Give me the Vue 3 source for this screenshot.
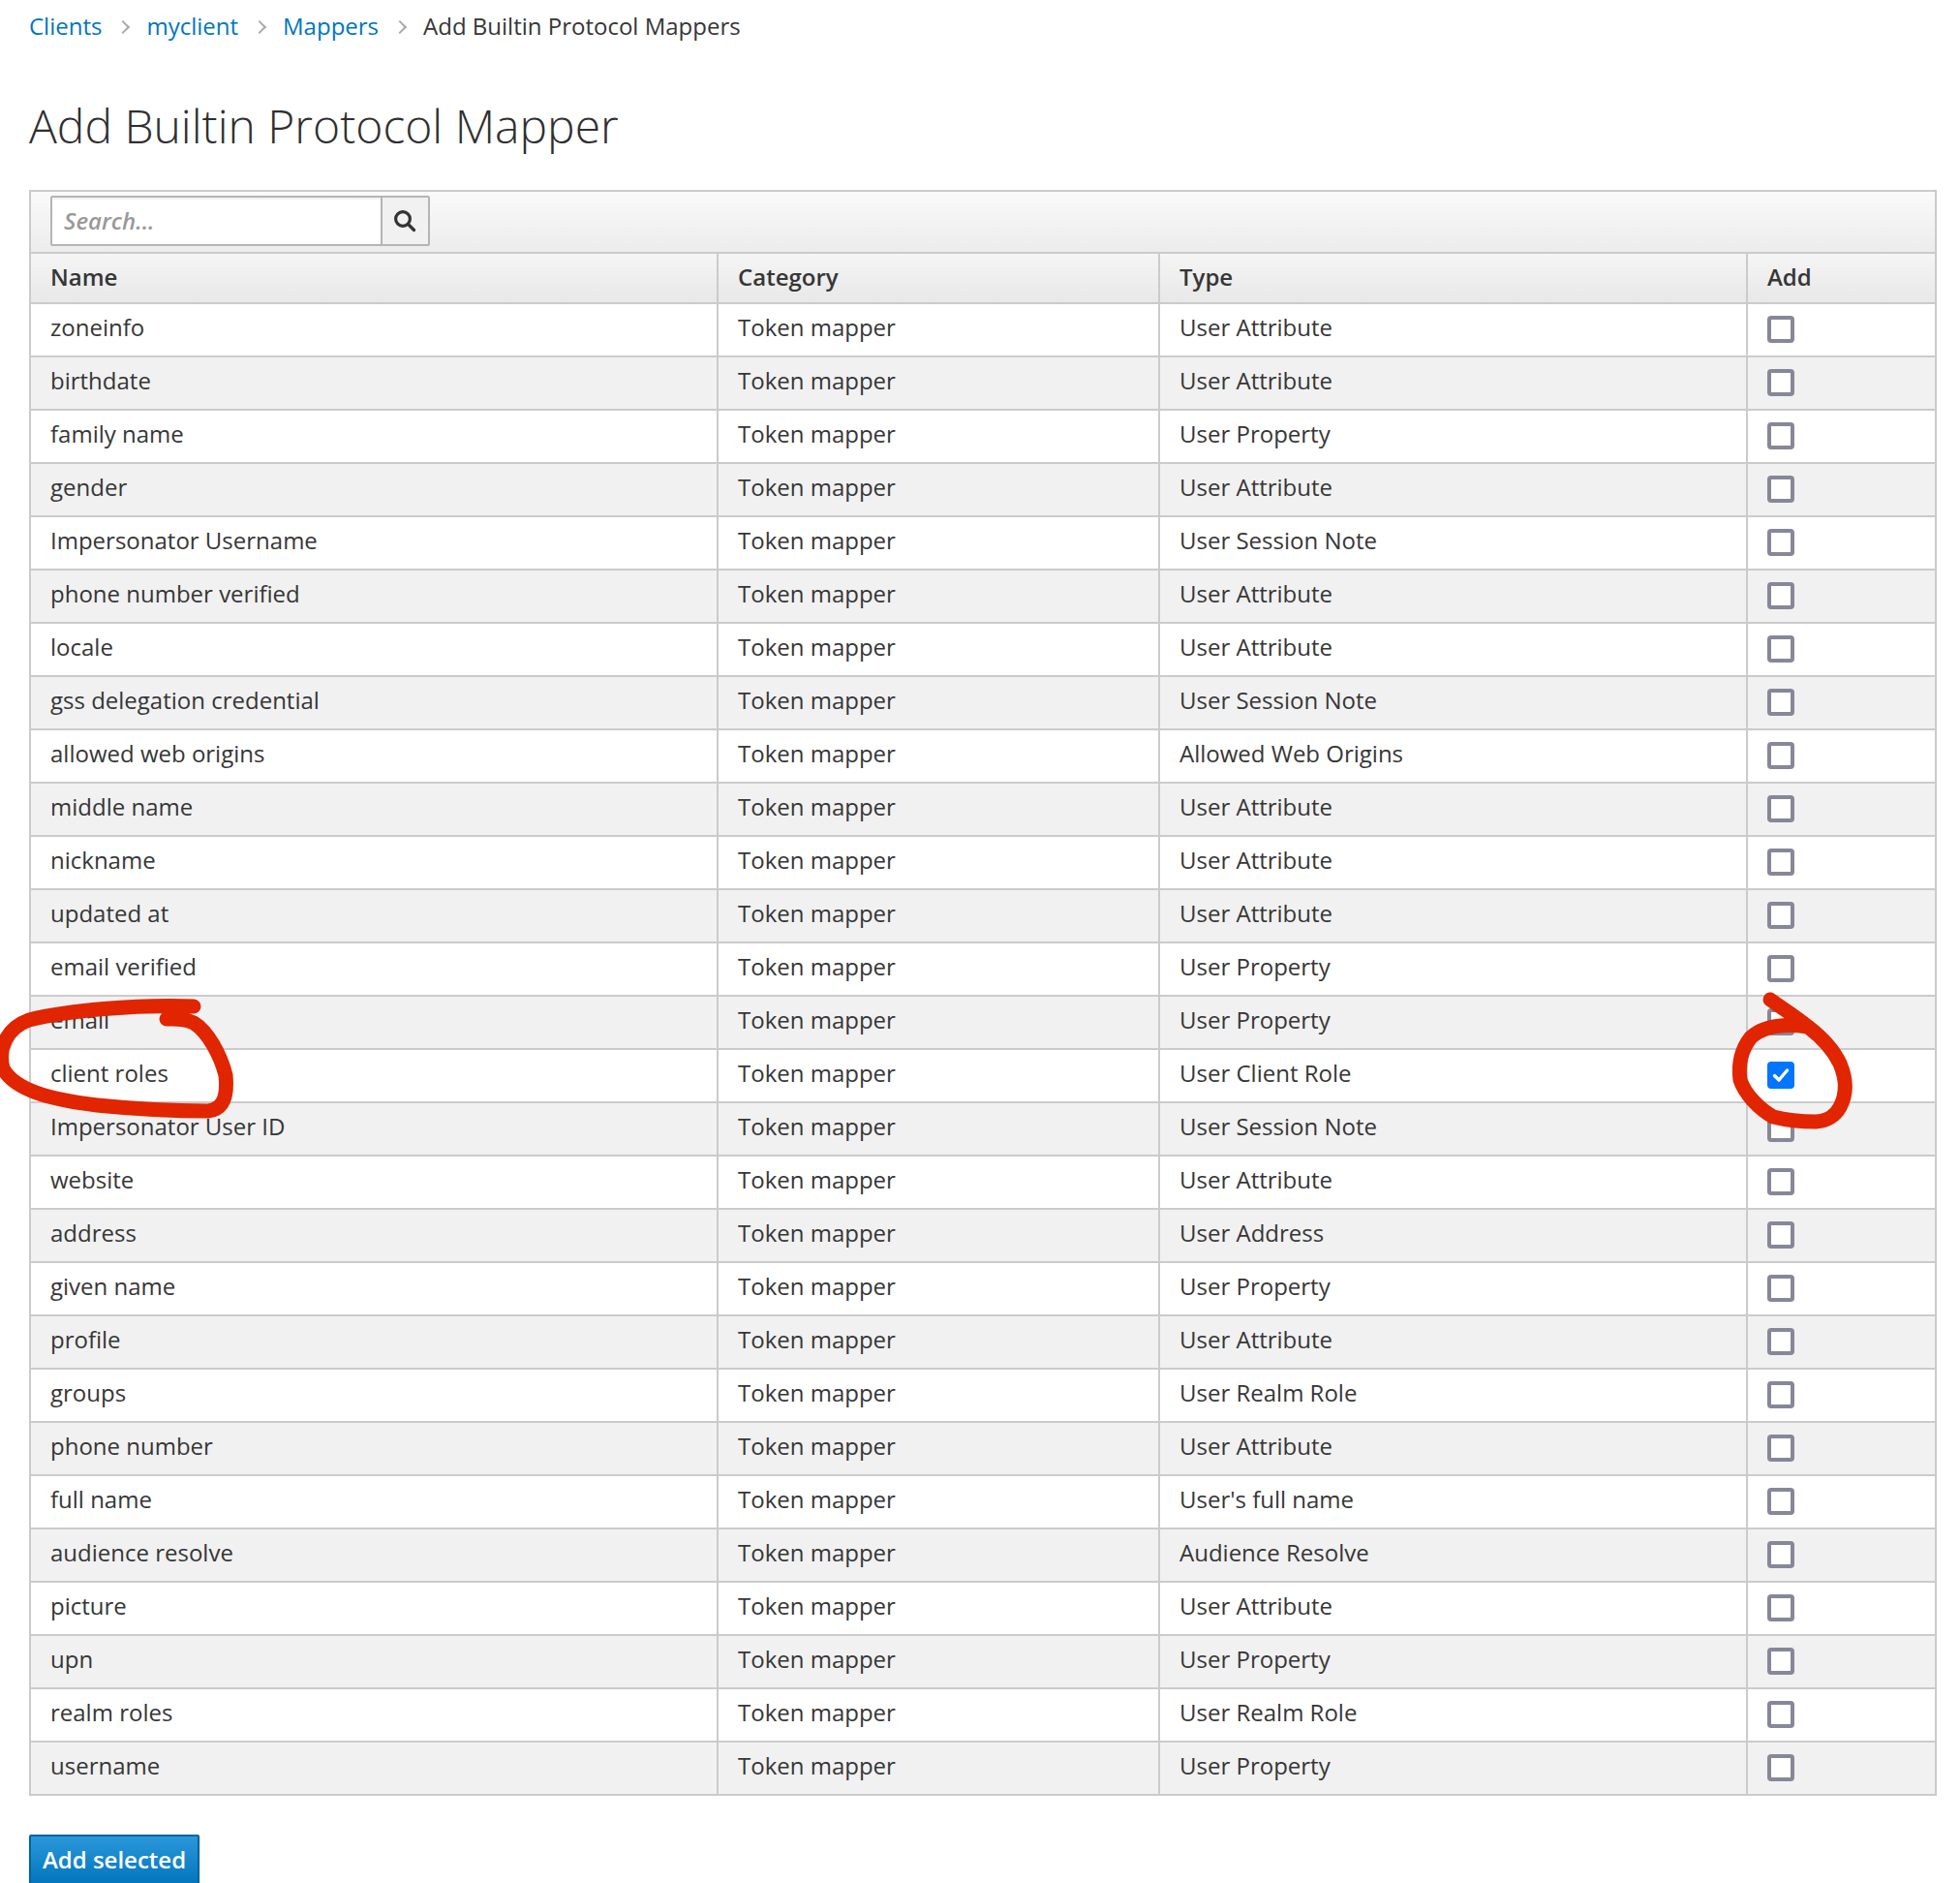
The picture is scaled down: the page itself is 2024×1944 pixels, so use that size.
<template>
  <div class="page">
    <ol class="crumbs">
      <li><a>Clients</a></li>
      <li><a>myclient</a></li>
      <li><a>Mappers</a></li>
      <li>Add Builtin Protocol Mappers</li>
    </ol>
    <h1 class="title">Add Builtin Protocol Mapper</h1>

    <table class="mappers">
      <colgroup>
        <col class="col-name" />
        <col class="col-category" />
        <col class="col-type" />
        <col class="col-add" />
      </colgroup>
      <thead>
        <tr class="toolbar">
          <th colspan="4">
            <div class="search">
              <input class="search__input" type="text" placeholder="Search..." />
              <button class="search__btn">
                <svg width="24" height="24" viewBox="0 0 24 24" fill="none" stroke="#333" stroke-width="3.2">
                  <circle cx="10" cy="10" r="7.4" />
                  <path d="M15.5 15.5 21.5 21.5" stroke-linecap="round" />
                </svg>
              </button>
            </div>
          </th>
        </tr>
        <tr class="heads">
          <th>Name</th>
          <th>Category</th>
          <th>Type</th>
          <th>Add</th>
        </tr>
      </thead>
      <tbody>
        <tr v-for="row in rows" :key="row[0]">
          <td>{{ row[0] }}</td>
          <td>Token mapper</td>
          <td>{{ row[1] }}</td>
          <td class="add-cell">
            <span :class="['check', { 'check--on': row[0] === 'client roles' }]">
              <svg v-if="row[0] === 'client roles'" width="20" height="20" viewBox="0 0 20 20" fill="none" stroke="#fff" stroke-width="3.4">
                <path d="M3.5 10.5 8 15 16.5 5" stroke-linecap="round" stroke-linejoin="round" />
              </svg>
            </span>
          </td>
        </tr>
      </tbody>
    </table>

    <button class="add-btn">Add selected</button>

    <svg class="scribble" width="2024" height="1944" viewBox="0 0 2024 1944" fill="none" stroke="#e02500" stroke-width="15" stroke-linecap="round" stroke-linejoin="round">
      <path d="M200 1039C140 1037 70 1043 30 1053C5 1062-2 1085 3 1103C15 1125 50 1135 100 1141C140 1145 180 1147 215 1147C232 1145 235 1130 233 1110C228 1090 215 1065 200 1056C190 1051 180 1052 172 1052" />
      <path d="M1828 1032C1842 1042 1855 1050 1867 1060C1880 1070 1893 1083 1900 1098C1906 1112 1908 1128 1900 1143C1895 1152 1888 1157 1875 1158C1860 1158 1843 1156 1831 1153C1817 1145 1802 1130 1797 1115C1795 1100 1797 1085 1808 1071C1820 1060 1840 1056 1867 1060" />
    </svg>
  </div>
</template>

<script setup>
const rows = [
  ['zoneinfo', 'User Attribute'],
  ['birthdate', 'User Attribute'],
  ['family name', 'User Property'],
  ['gender', 'User Attribute'],
  ['Impersonator Username', 'User Session Note'],
  ['phone number verified', 'User Attribute'],
  ['locale', 'User Attribute'],
  ['gss delegation credential', 'User Session Note'],
  ['allowed web origins', 'Allowed Web Origins'],
  ['middle name', 'User Attribute'],
  ['nickname', 'User Attribute'],
  ['updated at', 'User Attribute'],
  ['email verified', 'User Property'],
  ['email', 'User Property'],
  ['client roles', 'User Client Role'],
  ['Impersonator User ID', 'User Session Note'],
  ['website', 'User Attribute'],
  ['address', 'User Address'],
  ['given name', 'User Property'],
  ['profile', 'User Attribute'],
  ['groups', 'User Realm Role'],
  ['phone number', 'User Attribute'],
  ['full name', "User's full name"],
  ['audience resolve', 'Audience Resolve'],
  ['picture', 'User Attribute'],
  ['upn', 'User Property'],
  ['realm roles', 'User Realm Role'],
  ['username', 'User Property']
]
</script>

<style>
html,
body {
  margin: 0;
  background: #fff;
}
</style>

<style scoped>
.page {
  position: relative;
  height: 1944px;
  overflow: hidden;
  padding: 0 24px 0 30px;
  box-sizing: border-box;
  font-family: 'Open Sans', 'Liberation Sans', sans-serif;
  font-size: 24px;
  color: #363636;
}

.crumbs {
  display: flex;
  gap: 46px;
  margin: 0;
  padding: 10px 0 0;
  height: 44px;
  list-style: none;
  line-height: 34px;
}
.crumbs li {
  position: relative;
}
.crumbs li + li::before {
  content: '';
  position: absolute;
  left: -29px;
  top: 13px;
  width: 8px;
  height: 8px;
  border-top: 2px solid #aaa;
  border-right: 2px solid #aaa;
  transform: rotate(45deg);
}
.crumbs a {
  color: #0076bf;
}

.title {
  margin: 44px 0 0;
  height: 98px;
  font-size: 48px;
  font-weight: 300;
  line-height: 64px;
  color: #2f2f2f;
}

.mappers {
  width: 1968px;
  table-layout: fixed;
  border-collapse: collapse;
}
.col-name { width: 710px; }
.col-category { width: 456px; }
.col-type { width: 607px; }
.col-add { width: 195px; }

.mappers th,
.mappers td {
  box-sizing: border-box;
  height: 55px;
  padding: 0 20px 6px;
  border: 2px solid #cbcbcb;
  text-align: left;
  vertical-align: middle;
  white-space: nowrap;
}

.toolbar th {
  height: 64px;
  padding: 4px 0 6px 20px;
  vertical-align: top;
  background: linear-gradient(#fafafa, #ececec);
}

.heads th {
  height: 52px;
  padding-bottom: 4px;
  font-weight: 600;
  background: linear-gradient(#f5f5f5, #e8e8e8);
}

tbody tr:nth-child(even) td {
  background: #f1f1f1;
}

.search {
  display: flex;
  width: 392px;
  height: 52px;
  box-sizing: border-box;
  border: 2px solid #b5b5b5;
  border-radius: 2px;
}
.search__input {
  flex: 1;
  min-width: 0;
  padding: 0 12px 2px;
  border: none;
  outline: none;
  background: #fff;
  box-shadow: inset 0 2px 2px rgba(0, 0, 0, 0.06);
  font: italic 600 24px 'Open Sans', 'Liberation Sans', sans-serif;
}
.search__input::placeholder {
  color: #999;
  opacity: 1;
}
.search__btn {
  display: flex;
  align-items: center;
  justify-content: center;
  width: 49px;
  padding: 0 2px 0 0;
  border: none;
  border-left: 2px solid #b5b5b5;
  background: #f1f1f1;
}

.mappers .add-cell {
  padding-bottom: 2px;
}
.check {
  display: flex;
  align-items: center;
  justify-content: center;
  box-sizing: border-box;
  width: 28px;
  height: 28px;
  border: 4px solid #87879a;
  border-radius: 4px;
  background: #fff;
}
.check--on {
  border-color: #0075ff;
  background: #0075ff;
}

.add-btn {
  display: block;
  margin-top: 40px;
  width: 176px;
  height: 52px;
  padding: 0 0 2px;
  border: 2px solid #00659c;
  border-radius: 2px;
  background: linear-gradient(#2b97da, #0376bd);
  color: #fff;
  font: 600 24px 'Open Sans', 'Liberation Sans', sans-serif;
  box-shadow: 0 1px 2px rgba(0, 0, 0, 0.2);
}

.scribble {
  position: absolute;
  left: 0;
  top: 0;
  pointer-events: none;
}
</style>
